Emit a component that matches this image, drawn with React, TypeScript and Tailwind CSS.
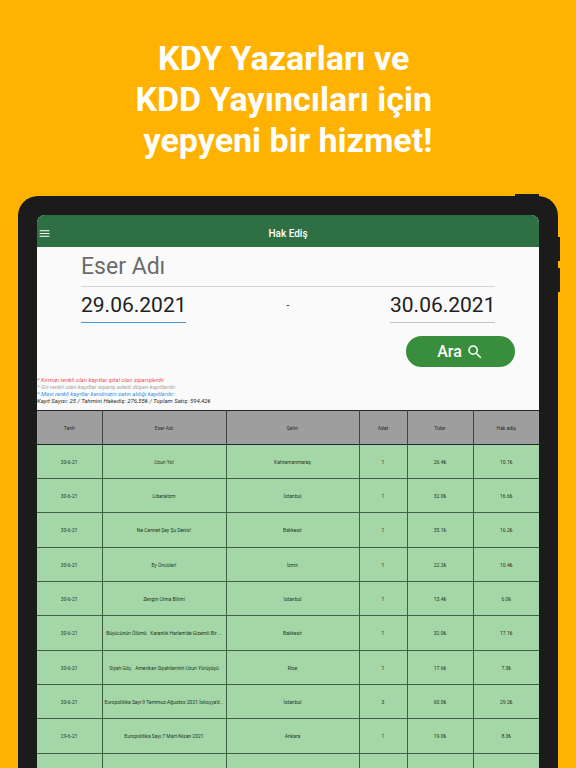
import { useState } from "react";
import { MdMenu, MdSearch } from "react-icons/md";

const COLUMNS = [
  { label: "Tarih", width: "w-[65px]" },
  { label: "Eser Adı", width: "w-[124px]" },
  { label: "Şehir", width: "w-auto" },
  { label: "Adet", width: "w-[48px]" },
  { label: "Tutar", width: "w-[66px]" },
  { label: "Hak ediş", width: "w-[66px]" },
];

const ROWS = [
  ["30-6-21", "Uzun Yol", "Kahramanmaraş", "1", "26.4₺", "10.1₺"],
  ["30-6-21", "Liberalizm", "İstanbul", "1", "32.0₺", "16.6₺"],
  ["30-6-21", "Ne Cennet Şey Şu Deniz!", "Balıkesir", "1", "35.1₺", "16.2₺"],
  ["30-6-21", "Ey Öncüler!", "İzmir", "1", "22.2₺", "10.4₺"],
  ["30-6-21", "Zengin Olma Bilimi", "İstanbul", "1", "13.4₺", "6.0₺"],
  ["30-6-21", "Büyücünün Ölümü \u00a0 Karanlık Harlem'de Gizemli Bir ...", "Balıkesir", "1", "32.0₺", "17.1₺"],
  ["30-6-21", "Siyah Göç \u00a0 Amerikan Siyahilerinin Uzun Yürüyüşü", "Rize", "1", "17.6₺", "7.3₺"],
  ["30-6-21", "Europolitika Sayı:9 Temmuz-Ağustos 2021 İskoçya'd...", "İstanbul", "3", "60.0₺", "29.2₺"],
  ["29-6-21", "Europolitika Sayı:7 Mart-Nisan 2021", "Ankara", "1", "19.0₺", "8.3₺"],
  ["", "", "", "", "", ""],
];

function SearchForm() {
  const [title, setTitle] = useState("");
  const [start, setStart] = useState("29.06.2021");
  const [end, setEnd] = useState("30.06.2021");

  return (
    <form className="flex flex-col pl-11 pr-6" onSubmit={e => e.preventDefault()}>
      <input
        type="text"
        aria-label="Eser Adı"
        placeholder="Eser Adı"
        value={title}
        onChange={e => setTitle(e.target.value)}
        className="mr-5 h-10 border-b border-[#d4d4d4] bg-transparent text-[23px] text-[#212121] outline-none placeholder:text-[#6b6b6b]"
      />
      <div className="mr-5 flex items-center justify-between">
        <input
          type="text"
          aria-label="Başlangıç tarihi"
          value={start}
          onChange={e => setStart(e.target.value)}
          className="h-9 w-[105px] border-b border-[#4a97dc] bg-transparent text-[21px] text-[#212121] outline-none"
        />
        <span className="text-xs text-[#555]">-</span>
        <input
          type="text"
          aria-label="Bitiş tarihi"
          value={end}
          onChange={e => setEnd(e.target.value)}
          className="h-9 w-[105px] border-b border-[#c4c4c4] bg-transparent text-[21px] text-[#212121] outline-none"
        />
      </div>
      <button
        type="submit"
        className="mt-[13px] flex h-[31px] w-[109px] items-center justify-center gap-1 self-end rounded-full bg-[#388e3c] text-base font-medium text-white"
      >
        Ara
        <MdSearch className="h-[18px] w-[18px]" />
      </button>
    </form>
  );
}

function Notes() {
  return (
    <div className="mt-[9px] text-[6px] leading-[7px] italic">
      <p className="text-[#f0524c]">* Kırmızı renkli olan kayıtlar iptal olan siparişlerdir</p>
      <p className="text-[#a3a3a3]">* Gri renkli olan kayıtlar sipariş adedi düşen kayıtlardır</p>
      <p className="text-[#2d96ee]">* Mavi renkli kayıtlar kendinizin satın aldığı kayıtlardır.</p>
      <p className="text-[#2c2c2c]">Kayıt Sayısı: 25 / Tahmini Hakediş: 276,55₺ / Toplam Satış: 594,42₺</p>
    </div>
  );
}

function RecordsTable() {
  return (
    <table className="mt-1.5 w-full table-fixed border-collapse text-center text-[5px] leading-[6px]">
      <thead>
        <tr className="h-[34px] border-y border-[#1f2a20] bg-[#9e9e9e] text-[#2b2b2b]">
          {COLUMNS.map(col => (
            <th key={col.label} className={`${col.width} border-l border-[#3c443d] p-0 font-normal first:border-l-0`}>
              {col.label}
            </th>
          ))}
        </tr>
      </thead>
      <tbody>
        {ROWS.map((row, i) => (
          <tr key={i} className="h-[34px] border-b border-[#3f6044] bg-[#a5d6a7] text-[#1c3a1f] nth-[3n]:h-[35px]">
            {row.map((cell, j) => (
              <td key={j} className="overflow-hidden border-l border-[#3f6044] p-0 whitespace-nowrap first:border-l-0">
                {cell}
              </td>
            ))}
          </tr>
        ))}
      </tbody>
    </table>
  );
}

export default function App() {
  return (
    <div className="flex h-screen flex-col overflow-hidden bg-[#ffb300] font-[Roboto,sans-serif]">
      <h1 className="pt-[38px] text-center text-[34px] leading-[41px] font-bold text-white">
        KDY Yazarları ve&nbsp;
        <br />
        KDD Yayıncıları için&nbsp;
        <br />
        yepyeni bir hizmet!
      </h1>

      {/* Tablet */}
      <div className="relative mx-[18px] mt-[35px] flex-1 rounded-t-[20px] bg-[#1b1b1b] px-[19px] pt-[19px]">
        <span className="absolute -top-0.5 right-[19px] h-1 w-6 bg-[#1b1b1b]" />
        <span className="absolute top-[41px] -right-0.5 h-6 w-1 bg-[#1b1b1b]" />
        <span className="absolute top-[72px] -right-0.5 h-6 w-1 bg-[#1b1b1b]" />

        <div className="overflow-hidden rounded-t-[8px] bg-[#fafafa]">
          <header className="grid h-8 grid-cols-[1fr_auto_1fr] items-center bg-[#2f6f44] pt-1 text-white">
            <button type="button" aria-label="Menü" className="ml-px w-[13px]">
              <MdMenu className="h-[13px] w-[13px]" />
            </button>
            <h2 className="text-[10px] font-medium">Hak Ediş</h2>
          </header>
          <main>
            <SearchForm />
            <Notes />
            <RecordsTable />
          </main>
        </div>
      </div>
    </div>
  );
}
